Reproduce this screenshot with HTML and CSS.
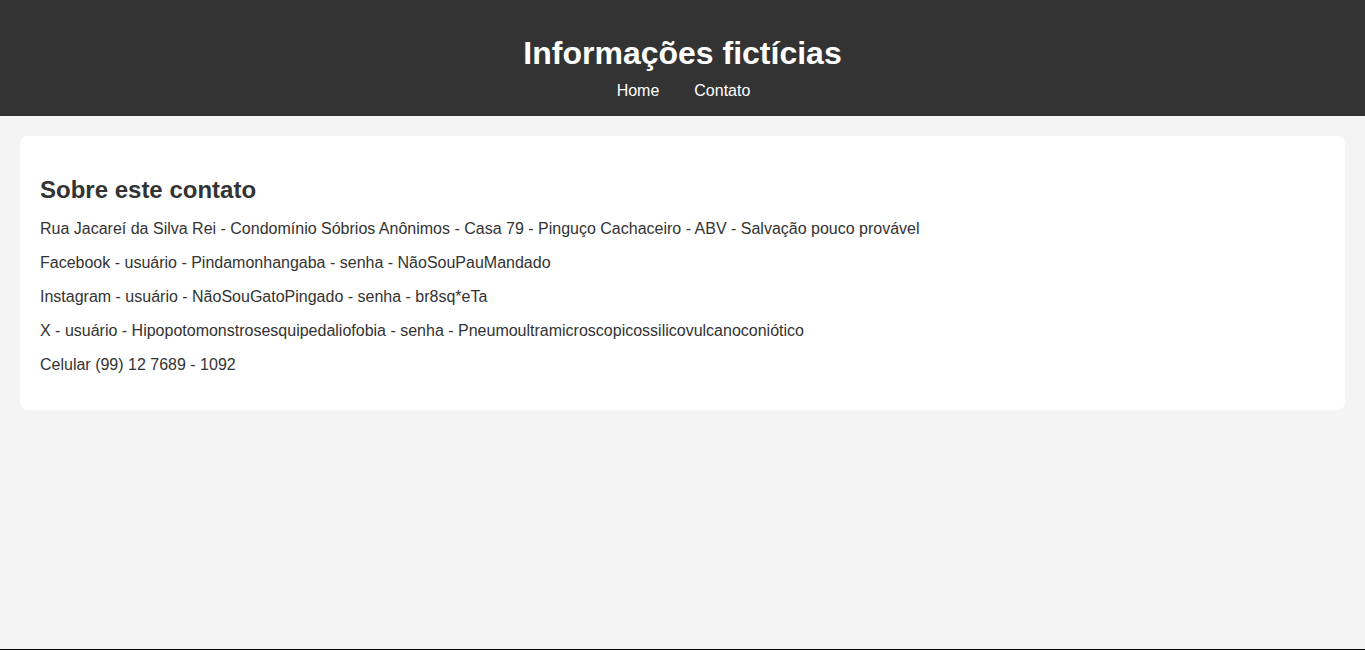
FILE: index.html
```html
<!DOCTYPE html>
<html lang="pt-BR">
<head>
<meta charset="utf-8">
<title>Informações fictícias</title>
<link rel="stylesheet" href="styles.css">
</head>
<body>
<div class="page">
  <header class="site-header">
    <h1 class="site-title">Informações fictícias</h1>
    <nav class="site-nav">
      <a href="#" class="nav-link">Home</a>
      <a href="#" class="nav-link">Contato</a>
    </nav>
  </header>
  <main class="content">
    <section class="card">
      <h2 class="card-title">Sobre este contato</h2>
      <p class="card-text">Rua Jacareí da Silva Rei - Condomínio Sóbrios Anônimos - Casa 79 - Pinguço Cachaceiro - ABV - Salvação pouco provável</p>
      <p class="card-text">Facebook - usuário - Pindamonhangaba - senha - NãoSouPauMandado</p>
      <p class="card-text">Instagram - usuário - NãoSouGatoPingado - senha - br8sq*eTa</p>
      <p class="card-text">X - usuário - Hipopotomonstrosesquipedaliofobia - senha - Pneumoultramicroscopicossilicovulcanoconiótico</p>
      <p class="card-text">Celular (99) 12 7689 - 1092</p>
    </section>
  </main>
</div>
<footer class="site-footer"></footer>
</body>
</html>
```

FILE: styles.css
```css
html, body {
  margin: 0;
  padding: 0;
}

body {
  background: #f4f4f4;
  color: #333333;
  font-family: "Liberation Sans", Arial, sans-serif;
  font-size: 16px;
}

.page {
  min-height: calc(100vh - 1px);
}

.site-header {
  background: #333333;
  color: #ffffff;
  text-align: center;
  padding: 35px 0 16px;
}

.site-title {
  margin: 0 0 10px;
  font-size: 32px;
  font-weight: bold;
  line-height: 37px;
}

.site-nav {
  display: flex;
  justify-content: center;
  gap: 35px;
  line-height: 18px;
  padding-left: 2px;
}

.nav-link {
  color: #ffffff;
  text-decoration: none;
}

.content {
  padding: 20px;
}

.card {
  background: #ffffff;
  border-radius: 8px;
  padding: 20px;
}

.card-title {
  margin: 20px 0 16px;
  font-size: 24px;
  font-weight: bold;
}

.card-text {
  margin: 16px 0;
  line-height: 18px;
}

.site-footer {
  background: #000000;
  height: 40px;
}
```
